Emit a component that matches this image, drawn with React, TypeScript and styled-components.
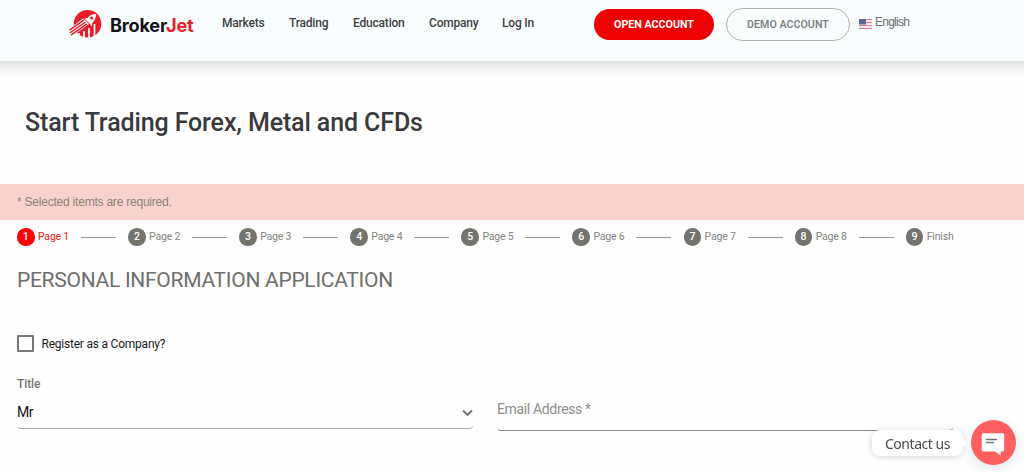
import React from "react";
import styled, { createGlobalStyle } from "styled-components";

const Global = createGlobalStyle`
  * { box-sizing: border-box; }
  body { margin: 0; background: #fefefe; font-family: Roboto, "Liberation Sans", sans-serif; overflow: hidden; }
`;

const Page = styled.div`
  height: 472px;
  overflow: hidden;
`;

const Header = styled.header`
  display: flex;
  align-items: flex-start;
  height: 61px;
  padding-left: 69px;
  background: #f9fdfe;
`;

const HeaderShade = styled.div`
  height: 16px;
  background: linear-gradient(#e3e2e2, #f2f1f1 45%, #fefefe);
`;

const Logo = styled.a`
  display: flex;
  width: 153px;
  padding-top: 9px;
`;

const LogoMark = styled.svg`
  width: 34px;
  height: 30px;
  flex: none;
`;

const LogoText = styled.span`
  margin: 5px 0 0 7px;
  font: 700 18.2px/22px Inter, sans-serif;
  letter-spacing: -0.25px;
  color: #141317;
  white-space: nowrap;
`;

const LogoAccent = styled.span`
  color: #ea1d2c;
`;

const Nav = styled.nav`
  display: flex;
  width: 372px;
  padding-top: 15px;
`;

const NavLink = styled.a<{ $w: number }>`
  width: ${(p) => p.$w}px;
  font-size: 12px;
  line-height: 16px;
  font-weight: 500;
  letter-spacing: -0.2px;
  color: #3f4142;
  white-space: nowrap;
`;

const PillButton = styled.button<{ $primary?: boolean }>`
  width: ${(p) => (p.$primary ? 120 : 124)}px;
  height: ${(p) => (p.$primary ? 31 : 33)}px;
  margin: ${(p) => (p.$primary ? "9px 12px 0 0" : "8px 9px 0 0")};
  padding: 0;
  border: ${(p) => (p.$primary ? "0" : "1px solid #b0b1b1")};
  border-radius: 17px;
  background: ${(p) => (p.$primary ? "#ee0000" : "transparent")};
  color: ${(p) => (p.$primary ? "#ffffff" : "#818382")};
  font: ${(p) => (p.$primary ? 700 : 600)} 10.7px/14px Roboto, sans-serif;
  white-space: nowrap;
`;

const Language = styled.div`
  display: flex;
  width: 52px;
  padding-top: 15px;
  font: 12px/15px "Liberation Sans", sans-serif;
  letter-spacing: -0.75px;
  color: #6d6f70;
`;

const Flag = styled.svg`
  width: 13px;
  height: 10px;
  margin: 4px 3px 0 0;
  flex: none;
`;

const Title = styled.h1`
  height: 107px;
  margin: 0;
  padding: 30px 0 0 25px;
  font-size: 25px;
  line-height: 32px;
  font-weight: 500;
  letter-spacing: -0.12px;
  color: #3a3a3c;
`;

const Notice = styled.div`
  height: 36px;
  padding-left: 17px;
  background: #f8d3cd;
  color: #8b827e;
  font: 12px/36px "Liberation Sans", sans-serif;
  letter-spacing: -0.22px;
`;

const Steps = styled.ol`
  display: flex;
  margin: 0;
  padding: 8px 0 0 17px;
  list-style: none;
`;

const Step = styled.li<{ $active?: boolean }>`
  display: flex;
  align-items: center;
  width: 111.1px;
  height: 18px;
  flex: none;
  font-size: 10.5px;
  letter-spacing: -0.2px;
  color: ${(p) => (p.$active ? "#ff1414" : "#83847f")};
`;

const StepNumber = styled.span<{ $active?: boolean }>`
  width: 17.5px;
  height: 17.5px;
  border-radius: 50%;
  background: ${(p) => (p.$active ? "#ff0000" : "#73746d")};
  color: #fff;
  font-size: 10.5px;
  line-height: 18px;
  font-weight: 500;
  text-align: center;
`;

const StepLabel = styled.span`
  width: 43px;
  margin-left: 3.5px;
  line-height: 16px;
  white-space: nowrap;
`;

const StepLine = styled.span`
  width: 35px;
  height: 1px;
  background: #9c9d95;
`;

const SectionTitle = styled.h2`
  margin: 0;
  padding: 21px 0 0 17px;
  font-size: 21px;
  line-height: 26px;
  font-weight: 400;
  letter-spacing: -0.28px;
  color: #6e6e6c;
`;

const CheckRow = styled.label`
  display: flex;
  align-items: center;
  margin: 42px 0 0 17px;
  height: 17px;
  font-size: 12px;
  letter-spacing: -0.22px;
  color: #1c1c1c;
`;

const CheckBox = styled.span`
  width: 17px;
  height: 17px;
  margin-right: 7.5px;
  border: 2px solid #777872;
  border-radius: 1px;
`;

const Fields = styled.div`
  display: flex;
  gap: 24px;
  padding: 24px 0 0 17px;
`;

const Field = styled.div`
  width: 456px;
`;

const FieldLabel = styled.div`
  height: 17px;
  font-size: 12px;
  line-height: 17px;
  font-weight: 500;
  letter-spacing: -0.1px;
  color: #777874;
`;

const SelectBox = styled.div`
  display: flex;
  justify-content: space-between;
  height: 36px;
  padding-top: 8px;
  border-bottom: 1.5px solid #a9aaa5;
  border-radius: 0 0 4px 4px;
  font-size: 14px;
  line-height: 22px;
  letter-spacing: -0.35px;
  color: #111;
`;

const Chevron = styled.svg`
  width: 11px;
  height: 8px;
  margin-top: 8px;
`;

const EmailBox = styled.div`
  height: 55px;
  padding-top: 23px;
  border-bottom: 1px solid #8b8c88;
  border-radius: 0 0 4px 4px;
  font-size: 14px;
  line-height: 20px;
  letter-spacing: -0.35px;
  color: #8d8e8a;
`;

const Contact = styled.aside`
  position: fixed;
  right: 8px;
  bottom: 7px;
  display: flex;
  align-items: center;
  gap: 8px;
`;

const ContactTip = styled.div`
  position: relative;
  width: 91px;
  height: 26px;
  border-radius: 8px;
  background: #fff;
  box-shadow: 0 1px 6px rgba(0, 0, 0, 0.16);
  font: 14px/27px "Noto Sans", sans-serif;
  letter-spacing: -0.45px;
  color: #4b4c4f;
  text-align: center;
  white-space: nowrap;
  &::after {
    content: "";
    position: absolute;
    left: 100%;
    top: 9px;
    border: 4px solid transparent;
    border-left-color: #fff;
    border-right: 0;
  }
`;

const ChatButton = styled.button`
  width: 45px;
  height: 45px;
  padding: 0;
  border: 0;
  border-radius: 50%;
  background: #ff5f5f;
  box-shadow: 0 3px 12px rgba(60, 80, 110, 0.14);
`;

const ChatIcon = styled.svg`
  display: block;
  width: 45px;
  height: 45px;
`;

const links = [
  { text: "Markets", width: 67 },
  { text: "Trading", width: 64 },
  { text: "Education", width: 76 },
  { text: "Company", width: 73 },
  { text: "Log In", width: 92 },
];

const steps = ["Page 1", "Page 2", "Page 3", "Page 4", "Page 5", "Page 6", "Page 7", "Page 8", "Finish"];

export default function App() {
  return (
    <Page>
      <Global />
      <Header>
        <Logo>
          <LogoMark viewBox="0 0 34 30">
            <circle cx="18.5" cy="14.7" r="13.8" fill="#e61e2a" />
            <path d="M0 20L14 9.5l6 5.5L3 27.5z" fill="#f9fdfe" />
            <path d="M15.5 9.8l3-.8c2-2.800 4.500-3.900 8.500-4 .1 4-1.200 6.600-3.500 8.600l-.8 3.600-2.200-2.700-3-2.700z" fill="#f9fdfe" />
            <circle cx="22.600" cy="9" r="1.500" fill="#e61e2a" />
            <path d="M.5 21.200L14.800 11.200M.8 24L16.500 13M2 26.200L18 14.900" stroke="#e61e2a" strokeWidth="1.500" />
            <path d="M10.200 24v4M15 22v7.500M20 19v11M25.500 15v13.500" stroke="#f9fdfe" strokeWidth="1.700" />
          </LogoMark>
          <LogoText>Broker<LogoAccent>Jet</LogoAccent></LogoText>
        </Logo>
        <Nav>
          {links.map((l) => <NavLink key={l.text} $w={l.width}>{l.text}</NavLink>)}
        </Nav>
        <PillButton $primary>OPEN ACCOUNT</PillButton>
        <PillButton>DEMO ACCOUNT</PillButton>
        <Language>
          <Flag viewBox="0 0 13 10">
            <path fill="#f3e8ea" d="M0 0h13v10H0z" />
            <path d="M0 .5h13M0 3.5h13M0 6.5h13M0 9.5h13" stroke="#d9828a" />
            <path fill="#596a98" d="M0 0h7v5.5H0z" />
          </Flag>
          English
        </Language>
      </Header>
      <HeaderShade />
      <Title>Start Trading Forex, Metal and CFDs</Title>
      <Notice>* Selected itemts are required.</Notice>
      <Steps>
        {steps.map((s, i) => (
          <Step key={s} $active={i === 0}>
            <StepNumber $active={i === 0}>{i + 1}</StepNumber>
            <StepLabel>{s}</StepLabel>
            {i < steps.length - 1 && <StepLine />}
          </Step>
        ))}
      </Steps>
      <SectionTitle>PERSONAL INFORMATION APPLICATION</SectionTitle>
      <CheckRow><CheckBox />Register as a Company?</CheckRow>
      <Fields>
        <Field>
          <FieldLabel>Title</FieldLabel>
          <SelectBox>
            Mr
            <Chevron viewBox="0 0 11 8"><path d="M1 1.5l4.5 4.3L10 1.5" fill="none" stroke="#73746f" strokeWidth="2" /></Chevron>
          </SelectBox>
        </Field>
        <Field><EmailBox>Email Address *</EmailBox></Field>
      </Fields>
      <Contact>
        <ContactTip>Contact us</ContactTip>
        <ChatButton aria-label="Open chat">
          <ChatIcon viewBox="0 0 45 45">
            <path d="M12.700 13.200h18.500q2 0 2 2v14.200q0 2-2 2h-1.500v4.300l-5.500-4.300H12.700q-2 0-2-2V15.200q0-2 2-2z" fill="#fff" />
            <path d="M15.500 19.500h10M15.500 22.500h7" stroke="#777" strokeWidth="1.300" strokeLinecap="round" />
          </ChatIcon>
        </ChatButton>
      </Contact>
    </Page>
  );
}
